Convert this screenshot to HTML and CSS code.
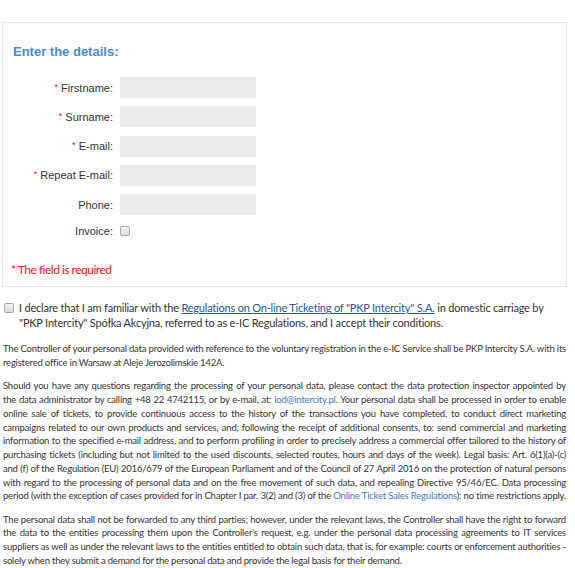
FILE: index.html
```html
<!DOCTYPE html>
<html>
<head>
<meta charset="utf-8">
<link rel="stylesheet" href="styles.css">
</head>
<body>
<div class="box">
  <h2 class="title">Enter the details:</h2>
  <div class="form">
    <label class="lbl"><span class="req">*</span> Firstname:</label><span class="field"></span>
    <label class="lbl"><span class="req">*</span> Surname:</label><span class="field"></span>
    <label class="lbl"><span class="req">*</span> E-mail:</label><span class="field"></span>
    <label class="lbl"><span class="req">*</span> Repeat E-mail:</label><span class="field"></span>
    <label class="lbl">Phone:</label><span class="field"></span>
    <label class="lbl">Invoice:</label><span class="cb-cell"><span class="cb"></span></span>
  </div>
  <p class="required">* The field is required</p>
</div>

<div class="declare">
  <span class="cb cb-declare"></span>
  <p class="declare-text"><span class="dl">I declare that I am familiar with the <a class="reg-link">Regulations on On-line Ticketing of "PKP Intercity" S.A.</a> in domestic carriage by</span>
  <span class="dl">"PKP Intercity" Spółka Akcyjna, referred to as e-IC Regulations, and I accept their conditions.</span></p>
</div>

<div class="legal">
  <p><span class="ln">The Controller of your personal data provided with reference to the voluntary registration in the e-IC Service shall be PKP Intercity S.A. with its</span>
  <span class="ln last">registered office in Warsaw at Aleje Jerozolimskie 142A.</span></p>
  <p><span class="ln">Should you have any questions regarding the processing of your personal data, please contact the data protection inspector appointed by</span>
  <span class="ln">the data administrator by calling +48 22 4742115, or by e-mail, at: <a class="lnk">iod@intercity.pl</a>. Your personal data shall be processed in order to enable</span>
  <span class="ln">online sale of tickets, to provide continuous access to the history of the transactions you have completed, to conduct direct marketing</span>
  <span class="ln">campaigns related to our own products and services, and, following the receipt of additional consents, to: send commercial and marketing</span>
  <span class="ln">information to the specified e-mail address, and to perform profiling in order to precisely address a commercial offer tailored to the history of</span>
  <span class="ln">purchasing tickets (including but not limited to the used discounts, selected routes, hours and days of the week). Legal basis: Art. 6(1)(a)-(c)</span>
  <span class="ln">and (f) of the Regulation (EU) 2016/679 of the European Parliament and of the Council of 27 April 2016 on the protection of natural persons</span>
  <span class="ln">with regard to the processing of personal data and on the free movement of such data, and repealing Directive 95/46/EC. Data processing</span>
  <span class="ln">period (with the exception of cases provided for in Chapter I par. 3(2) and (3) of the <a class="lnk">Online Ticket Sales Regulations</a>): no time restrictions apply.</span></p>
  <p><span class="ln">The personal data shall not be forwarded to any third parties; however, under the relevant laws, the Controller shall have the right to forward</span>
  <span class="ln">the data to the entities processing them upon the Controller's request, e.g. under the personal data processing agreements to IT services</span>
  <span class="ln">suppliers as well as under the relevant laws to the entities entitled to obtain such data, that is, for example: courts or enforcement authorities -</span>
  <span class="ln last">solely when they submit a demand for the personal data and provide the legal basis for their demand.</span></p>
</div>
</body>
</html>
```

FILE: styles.css
```css
html, body {
  margin: 0;
  padding: 0;
  background: #fff;
}
body {
  font-family: "Liberation Sans", Arial, sans-serif;
  color: #333;
}
.box {
  margin: 22px 0 0 2px;
  width: 554px;
  border: 1px solid #e6e6e6;
  padding: 21px 0 8px 9px;
  box-sizing: content-box;
}
.title {
  margin: 0 0 0 1px;
  font-size: 13px;
  line-height: 16px;
  font-weight: bold;
  color: #4b8cc8;
}
.form {
  display: grid;
  grid-template-columns: 101px 136px;
  column-gap: 7px;
  row-gap: 8.25px;
  margin-top: 17px;
}
.lbl {
  font-size: 11px;
  text-align: right;
  align-self: center;
  color: #333;
}
.req {
  color: #e8161b;
  font-size: 9px;
  vertical-align: 2px;
}
.field {
  height: 21px;
  background: #ebebeb;
}
.cb-cell {
  height: 16px;
  display: flex;
  align-items: center;
}
.cb {
  display: inline-block;
  width: 8px;
  height: 8px;
  border: 1px solid #a9a9a9;
  border-radius: 2px;
  background: linear-gradient(#f4f4f4, #dcdcdc);
}
.required {
  margin: 23px 0 0 -1px;
  font-family: Lato, sans-serif;
  font-size: 12px;
  letter-spacing: -0.5px;
  line-height: 16px;
  color: #f0141c;
}
.declare {
  display: flex;
  align-items: flex-start;
  margin: 13px 6px 0 4px;
}
.cb-declare {
  margin-top: 3px;
  flex: none;
}
.declare-text {
  margin: 0 0 0 5px;
  font-family: Lato, sans-serif;
  font-size: 11px;
  letter-spacing: -0.2px;
  line-height: 15px;
  color: #333;
}
.dl {
  display: block;
  white-space: nowrap;
}
.reg-link {
  color: #23569e;
  text-decoration: underline;
}
.legal {
  margin: 12px 9px 0 3px;
  font-family: Lato, sans-serif;
  font-size: 9.5px;
  letter-spacing: -0.2px;
  word-spacing: -1px;
  line-height: 13.75px;
  color: #333;
  text-align: justify;
}
.legal p {
  margin: 0 0 9.5px 0;
}
.ln {
  display: block;
  white-space: nowrap;
  text-align-last: justify;
}
.ln.last {
  text-align-last: auto;
  word-spacing: 0;
}
.lnk {
  color: #3b78c0;
}
```
